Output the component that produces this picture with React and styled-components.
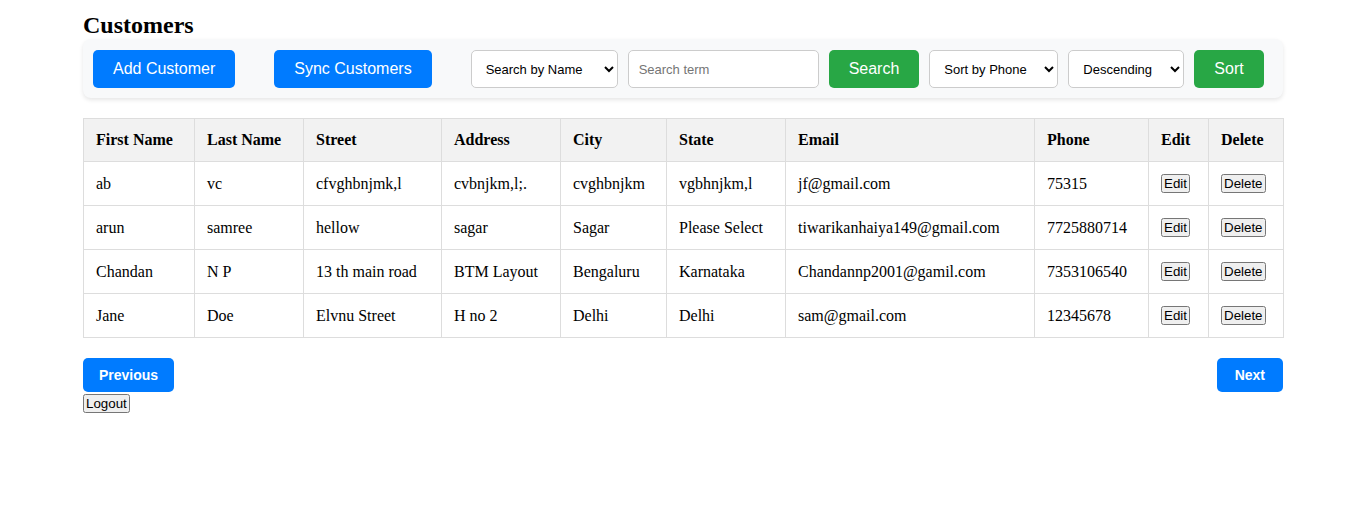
import React, { useState } from "react";
import styled, { createGlobalStyle } from "styled-components";

const GlobalStyle = createGlobalStyle`
  body {
    margin: 0;
    font-family: "Liberation Serif", "Times New Roman", serif;
    background: #fff;
    color: #000;
  }
`;

const Page = styled.div`
  max-width: 1200px;
  margin: 0 auto;
  padding-top: 12px;
`;

const Title = styled.h2`
  font-size: 24px;
  font-weight: bold;
  margin: 0;
  line-height: 27px;
`;

const Toolbar = styled.div`
  display: flex;
  align-items: center;
  background: #f8f9fa;
  border-radius: 8px;
  box-shadow: 0 2px 4px rgba(0, 0, 0, 0.1);
  padding: 11px 20px 10px 10px;
  gap: 10px;
`;

const Button = styled.button`
  flex-shrink: 0;
  white-space: nowrap;
  height: 38px;
  padding: 0 20px;
  border: none;
  border-radius: 5px;
  background: ${(p) => (p.$green ? "#28a745" : "#007bff")};
  color: #fff;
  font-family: "Liberation Sans", Arial, sans-serif;
  font-size: 16px;
  cursor: pointer;
  margin-right: ${(p) => p.$space || 0}px;
`;

const Select = styled.select`
  flex-shrink: 0;
  height: 38px;
  padding: 0 8px 0 10px;
  border: 1px solid #ccc;
  border-radius: 5px;
  background: #fff;
  font-family: "Liberation Sans", Arial, sans-serif;
  font-size: 13px;
  color: #000;
  width: ${(p) => p.$w}px;
`;

const Input = styled.input`
  flex-shrink: 0;
  height: 38px;
  box-sizing: border-box;
  padding: 0 10px;
  border: 1px solid #ccc;
  border-radius: 5px;
  font-family: "Liberation Sans", Arial, sans-serif;
  font-size: 13px;
  width: 191px;
  &::placeholder {
    color: #757575;
  }
`;

const Table = styled.table`
  width: 100%;
  border-collapse: collapse;
  margin-top: 20px;
  table-layout: fixed;
`;

const Th = styled.th`
  box-sizing: border-box;
  height: 43px;
  background: #f2f2f2;
  border: 1px solid #ddd;
  padding: 0 12px;
  text-align: left;
  font-size: 16px;
  width: ${(p) => p.$w}px;
`;

const Td = styled.td`
  box-sizing: border-box;
  height: 44px;
  border: 1px solid #ddd;
  padding: 0 12px;
  font-size: 16px;
  white-space: nowrap;
`;

const SmallButton = styled.button`
  font-family: "Liberation Sans", Arial, sans-serif;
  font-size: 13.33px;
  padding: 0 1px;
`;

const Pager = styled.div`
  display: flex;
  justify-content: space-between;
  margin-top: 20px;
`;

const PageButton = styled.button`
  height: 34px;
  padding: 0 ${(p) => p.$pad}px;
  border: none;
  border-radius: 5px;
  background: #007bff;
  color: #fff;
  font-family: "Liberation Sans", Arial, sans-serif;
  font-size: 14px;
  font-weight: bold;
  cursor: pointer;
`;

const LogoutButton = styled.button`
  display: block;
  margin-top: 2px;
  font-family: "Liberation Sans", Arial, sans-serif;
  font-size: 13.33px;
  padding: 0 1px;
`;

const columns = [
  { name: "First Name", w: 111 },
  { name: "Last Name", w: 109 },
  { name: "Street", w: 138 },
  { name: "Address", w: 119 },
  { name: "City", w: 106 },
  { name: "State", w: 119 },
  { name: "Email", w: 249 },
  { name: "Phone", w: 114 },
  { name: "Edit", w: 60 },
  { name: "Delete", w: 75 },
];

const customers = [
  ["ab", "vc", "cfvghbnjmk,l", "cvbnjkm,l;.", "cvghbnjkm", "vgbhnjkm,l", "jf@gmail.com", "75315"],
  ["arun", "samree", "hellow", "sagar", "Sagar", "Please Select", "tiwarikanhaiya149@gmail.com", "7725880714"],
  ["Chandan", "N P", "13 th main road", "BTM Layout", "Bengaluru", "Karnataka", "Chandannp2001@gamil.com", "7353106540"],
  ["Jane", "Doe", "Elvnu Street", "H no 2", "Delhi", "Delhi", "sam@gmail.com", "12345678"],
];

const App = () => {
  const [term, setTerm] = useState("");

  return (
    <Page>
      <GlobalStyle />
      <Title>Customers</Title>
      <Toolbar>
        <Button $space={29}>Add Customer</Button>
        <Button $space={29}>Sync Customers</Button>
        <Select $w={147} defaultValue="name">
          <option value="name">Search by Name</option>
        </Select>
        <Input
          placeholder="Search term"
          value={term}
          onChange={(e) => setTerm(e.target.value)}
        />
        <Button $green>Search</Button>
        <Select $w={129} defaultValue="phone">
          <option value="phone">Sort by Phone</option>
        </Select>
        <Select $w={116} defaultValue="desc">
          <option value="desc">Descending</option>
        </Select>
        <Button $green>Sort</Button>
      </Toolbar>

      <Table>
        <thead>
          <tr>
            {columns.map((c) => (
              <Th key={c.name} $w={c.w}>
                {c.name}
              </Th>
            ))}
          </tr>
        </thead>
        <tbody>
          {customers.map((row) => (
            <tr key={row[6]}>
              {row.map((cell, i) => (
                <Td key={i}>{cell}</Td>
              ))}
              <Td>
                <SmallButton>Edit</SmallButton>
              </Td>
              <Td>
                <SmallButton>Delete</SmallButton>
              </Td>
            </tr>
          ))}
        </tbody>
      </Table>

      <Pager>
        <PageButton $pad={16}>Previous</PageButton>
        <PageButton $pad={18}>Next</PageButton>
      </Pager>
      <LogoutButton>Logout</LogoutButton>
    </Page>
  );
};

export default App;
